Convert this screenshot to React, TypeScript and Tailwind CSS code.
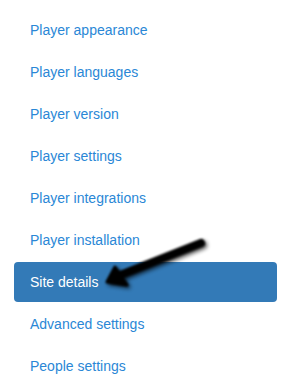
const items = [
  "Player appearance",
  "Player languages",
  "Player version",
  "Player settings",
  "Player integrations",
  "Player installation",
  "Site details",
  "Advanced settings",
  "People settings",
];

const ACTIVE = "Site details";

export default function App() {
  return (
    <div className="relative w-[301px] h-[388px] bg-white overflow-hidden font-['Liberation_Sans',Arial,sans-serif]">
      <ul className="flex flex-col gap-[2px] pt-[10px] pl-[14px] w-[277px]">
        {items.map((label) => (
          <li key={label}>
            <a
              className={
                label === ACTIVE
                  ? "block h-[40px] leading-[40px] pl-[16px] rounded-[4px] bg-[#337ab7] text-white text-[14px]"
                  : "block h-[40px] leading-[40px] pl-[16px] text-[#2a87d6] text-[14px]"
              }
            >
              {label}
            </a>
          </li>
        ))}
      </ul>
      {/* arrow pointing at the active item */}
      <svg
        className="absolute left-0 top-0 pointer-events-none"
        width="301"
        height="388"
        viewBox="0 0 301 388"
      >
        <defs>
          <filter id="shadow" x="-20%" y="-20%" width="140%" height="140%">
            <feGaussianBlur stdDeviation="2" />
          </filter>
          <filter id="soft" x="-20%" y="-20%" width="140%" height="140%">
            <feGaussianBlur stdDeviation="0.8" />
          </filter>
        </defs>
        <g filter="url(#shadow)" fill="#000" stroke="#000" strokeLinecap="round" strokeLinejoin="round" opacity="0.7" transform="translate(2 2)">
          <line x1="201" y1="243" x2="118" y2="276" strokeWidth="8" />
          <polygon points="107,282 115,267 127,285" strokeWidth="3" />
        </g>
        <g filter="url(#soft)" fill="#000" stroke="#000" strokeLinecap="round" strokeLinejoin="round">
          <line x1="201" y1="243" x2="118" y2="276" strokeWidth="8" />
          <polygon points="107,282 115,267 127,285" strokeWidth="3" />
        </g>
      </svg>
    </div>
  );
}
